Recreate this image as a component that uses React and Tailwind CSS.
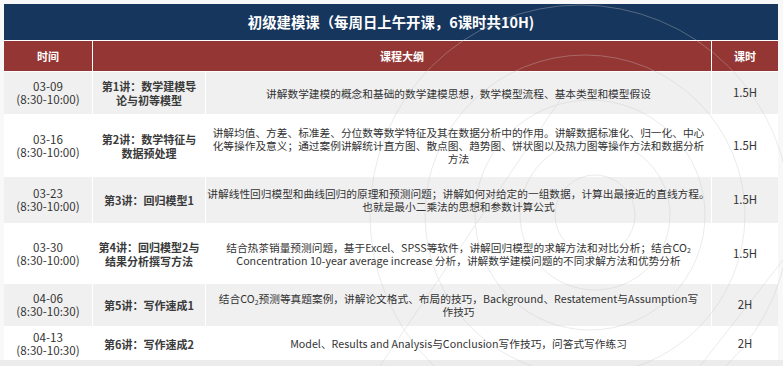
import React from "react";

const font = { fontFamily: '"Noto Sans CJK SC", "Noto Sans", sans-serif' };

const rows = [
  {
    date: "03-09",
    time: "(8:30-10:00)",
    title: ["第1讲：数学建模导", "论与初等模型"],
    desc: ["讲解数学建模的概念和基础的数学建模思想，数学模型流程、基本类型和模型假设"],
    hours: "1.5H",
    h: "h-[42px]",
    gray: true,
  },
  {
    date: "03-16",
    time: "(8:30-10:00)",
    title: ["第2讲：数学特征与", "数据预处理"],
    desc: [
      "讲解均值、方差、标准差、分位数等数学特征及其在数据分析中的作用。讲解数据标准化、归一化、中心",
      "化等操作及意义；通过案例讲解统计直方图、散点图、趋势图、饼状图以及热力图等操作方法和数据分析",
      "方法",
    ],
    hours: "1.5H",
    h: "h-[61px]",
    gray: false,
  },
  {
    date: "03-23",
    time: "(8:30-10:00)",
    title: ["第3讲：回归模型1"],
    desc: [
      "讲解线性回归模型和曲线回归的原理和预测问题；讲解如何对给定的一组数据，计算出最接近的直线方程。",
      "也就是最小二乘法的思想和参数计算公式",
    ],
    hours: "1.5H",
    h: "h-[46px]",
    gray: true,
  },
  {
    date: "03-30",
    time: "(8:30-10:00)",
    title: ["第4讲：回归模型2与", "结果分析撰写方法"],
    desc: [
      <>结合热茶销量预测问题，基于Excel、SPSS等软件，讲解回归模型的求解方法和对比分析；结合CO<sub className="text-[7px]">2</sub></>,
      "Concentration 10-year average increase 分析，讲解数学建模问题的不同求解方法和优势分析",
    ],
    hours: "1.5H",
    h: "h-[59px]",
    gray: false,
  },
  {
    date: "04-06",
    time: "(8:30-10:30)",
    title: ["第5讲：写作速成1"],
    desc: [
      <>结合CO<sub className="text-[7px]">2</sub>预测等真题案例，讲解论文格式、布局的技巧，Background、Restatement与Assumption写</>,
      "作技巧",
    ],
    hours: "2H",
    h: "h-[42px]",
    gray: true,
  },
  {
    date: "04-13",
    time: "(8:30-10:30)",
    title: ["第6讲：写作速成2"],
    desc: ["Model、Results and Analysis与Conclusion写作技巧，问答式写作练习"],
    hours: "2H",
    h: "h-[33px]",
    gray: false,
  },
];

const cols = "grid grid-cols-[88px_112px_505px_66px] gap-x-[1px]";

export default function App() {
  return (
    <div className="relative w-[783px] h-[366px] bg-[#f8f8f8] overflow-hidden" style={font}>
      <div className="pt-[4px] pl-[4px]">
        <div className="w-[774px] flex flex-col gap-y-[1px] bg-white">
          <div className="h-[36px] bg-[#17365d] flex items-center justify-center text-white font-bold text-[14.4px]">
            初级建模课（每周日上午开课，6课时共10H)
          </div>
          <div className={`${cols} h-[30px] text-white font-bold text-[11px]`}>
            <div className="bg-[#943634] flex items-center justify-center">时间</div>
            <div className="bg-[#943634] flex items-center justify-center col-span-2">课程大纲</div>
            <div className="bg-[#943634] flex items-center justify-center">课时</div>
          </div>
          {rows.map((r, i) => {
            const bg = r.gray ? "bg-[#f0f0f0]" : "bg-white";
            return (
              <div key={i} className={`${cols} ${r.h} text-[#333333]`}>
                <div className={`${bg} flex flex-col items-center justify-center text-[11.6px] leading-[13px]`}>
                  <div>{r.date}</div>
                  <div>{r.time}</div>
                </div>
                <div className={`${bg} flex flex-col items-center justify-center text-[11px] leading-[14px] font-bold text-[#3a3a3a]`}>
                  {r.title.map((t, k) => (
                    <div key={k} className="whitespace-nowrap">{t}</div>
                  ))}
                </div>
                <div className={`${bg} flex flex-col items-center justify-center text-[10.7px] leading-[13px] text-center`}>
                  {r.desc.map((t, k) => (
                    <div key={k} className="whitespace-nowrap">{t}</div>
                  ))}
                </div>
                <div className={`${bg} flex items-center justify-center text-[11.4px]`}>{r.hours}</div>
              </div>
            );
          })}
        </div>
      </div>
      <div className="absolute left-0 right-0 bottom-0 h-[6px] bg-[#ececec]" />
      <svg className="absolute inset-0 pointer-events-none" width="783" height="366">
        <g fill="none" stroke="#c8c8c8" strokeWidth="1" opacity="0.35">
          <circle cx="595" cy="215" r="40" />
          <circle cx="595" cy="215" r="75" />
          <circle cx="590" cy="215" r="115" />
          <circle cx="585" cy="215" r="160" />
          <circle cx="580" cy="215" r="210" />
          <line x1="380" y1="366" x2="560" y2="100" />
          <line x1="700" y1="366" x2="783" y2="260" />
        </g>
      </svg>
    </div>
  );
}
